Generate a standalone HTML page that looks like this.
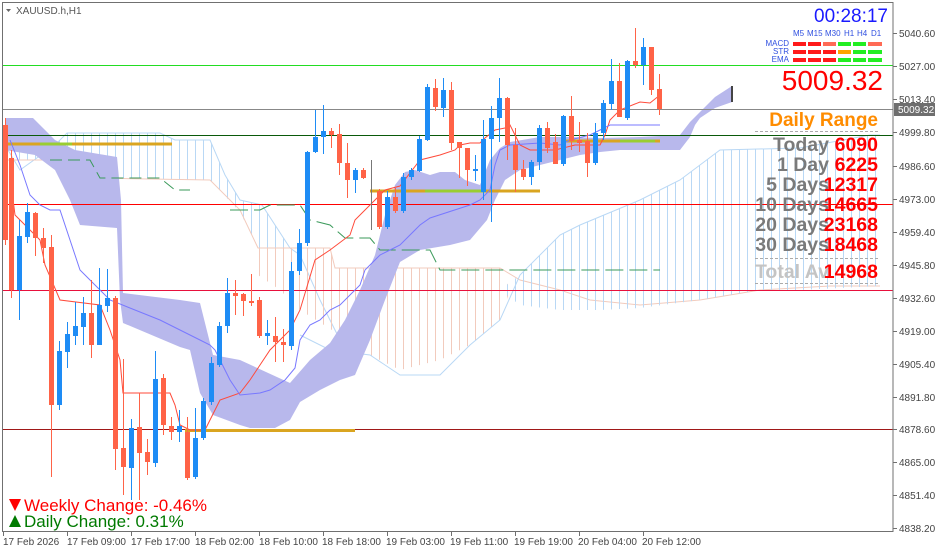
<!DOCTYPE html>
<html><head><meta charset="utf-8"><style>
html,body{margin:0;padding:0;background:#fff;}
svg{display:block;font-family:"Liberation Sans",sans-serif;}
.h{shape-rendering:crispEdges}
</style></head><body>
<svg width="939" height="552" viewBox="0 0 939 552" xmlns="http://www.w3.org/2000/svg">
<defs>
<pattern id="hb" width="8" height="10" patternUnits="userSpaceOnUse"><rect x="3" y="0" width="1" height="10" fill="#b9d8f5"/></pattern>
<pattern id="hs" width="8" height="10" patternUnits="userSpaceOnUse"><rect x="3" y="0" width="1" height="10" fill="#f2cbbd"/></pattern>
</defs>
<rect width="939" height="552" fill="#fff"/>
<!-- hatched clouds -->
<polygon fill="url(#hb)" points="8,150 55,145 67,133 160,133 175,140 210,140 225,175 240,200 262,205 290,248 258,248 240,212 210,180 90,178 85,160 20,160"/>
<polyline fill="none" stroke="#b9d8f5" points="8,150 20,170 55,145 67,133 160,133 175,140 210,140 225,175 240,200 262,205 290,248 300,255 320,300 330,320 340,340"/>
<polygon fill="url(#hs)" points="258,248 330,248 335,268 500,268 510,290 500,320 470,345 440,360 400,370 370,355 340,335 300,310 280,290 258,275"/>
<polyline fill="none" stroke="#f2cbbd" points="8,160 85,160 90,178 210,180 240,210 258,248 330,248 335,268 500,268 520,280 560,290 590,300 640,305 700,300 760,290 830,286 880,286"/>
<polygon fill="url(#hb)" points="500,290 520,275 560,235 580,225 640,200 680,180 720,150 800,148 870,135 880,135 880,286 800,290 760,290 700,300 640,308 600,310 560,310 520,305"/>
<polyline fill="none" stroke="#b9d8f5" points="300,335 330,350 370,355 400,375 440,375 470,345 500,320 520,275 560,235 580,225 640,200 680,180 720,150 800,148 870,135 880,135"/>
<!-- kumo -->
<polygon fill="#b8b8ec" points="5,118 33,118 40,125 55,140 75,150 117,157 121,200 123,293 180,300 200,303 213,355 240,360 290,383 310,360 330,343 345,320 360,290 375,255 385,215 395,185 405,172 415,170 430,175 440,172 455,172 465,180 480,185 490,160 500,148 510,142 540,137 570,137 600,138 640,137 680,135 690,122 700,112 715,97 732,86 732,102 715,108 700,118 695,125 690,137 680,150 620,150 600,152 580,155 560,160 540,165 520,170 505,180 495,200 487,220 470,240 450,245 420,250 400,262 385,300 370,340 355,375 340,380 320,390 300,402 290,420 275,428 250,428 240,425 213,415 200,393 190,350 180,347 123,323 120,300 117,228 80,225 70,200 55,170 35,155 5,150"/>
<line x1="732" y1="86" x2="732" y2="102" stroke="#444" stroke-width="2"/>
<!-- horizontal lines -->
<g class="h">
<line x1="3" y1="65.5" x2="893" y2="65.5" stroke="#22dd22"/>
<line x1="3" y1="109.5" x2="893" y2="109.5" stroke="#888"/>
<line x1="3" y1="135.5" x2="893" y2="135.5" stroke="#0a5a0a"/>
<line x1="3" y1="204.5" x2="893" y2="204.5" stroke="#ff0000"/>
<line x1="3" y1="290.5" x2="893" y2="290.5" stroke="#e8103c"/>
<line x1="3" y1="429.5" x2="893" y2="429.5" stroke="#a01818"/>
</g>
<!-- dashed chikou-like green -->
<polyline fill="none" stroke="#3a9a5a" stroke-dasharray="12,6" points="50,160 90,160 100,178 160,178 175,190 190,190"/>
<polyline fill="none" stroke="#3a9a5a" stroke-dasharray="18,6" points="230,210 260,210 270,205 300,205 310,220 330,225 345,238 370,238 380,250 430,250 440,270 660,270"/>
<!-- gold bars -->
<line x1="8" y1="144" x2="172" y2="144" stroke="#daa520" stroke-width="3"/>
<line x1="40" y1="144" x2="72" y2="144" stroke="#9acd32" stroke-width="3"/>
<line x1="370" y1="191" x2="540" y2="191" stroke="#daa520" stroke-width="3"/>
<line x1="425" y1="191" x2="485" y2="191" stroke="#9acd32" stroke-width="3"/>
<line x1="185" y1="430.5" x2="355" y2="430.5" stroke="#daa520" stroke-width="3"/>
<line x1="565" y1="141" x2="660" y2="141" stroke="#daa520" stroke-width="3"/>
<line x1="620" y1="141" x2="655" y2="141" stroke="#9acd32" stroke-width="3"/>
<!-- tenkan / kijun -->
<polyline fill="none" stroke="#ff4a3a" points="10,175 15,215 40,240 45,265 60,300 100,305 110,330 120,360 123,393 170,393 175,405 180,425 190,430 205,430 210,420 220,400 240,393 250,380 260,365 270,350 280,340 290,330 300,310 315,260 330,250 350,235 355,220 375,200 385,190 400,186 420,160 440,155 455,150 460,145 470,143 480,143 485,138 495,130 505,128 510,125 520,145 530,150 555,150 575,145 600,145 605,135 610,120 620,110 640,102 650,103 660,95"/>
<polyline fill="none" stroke="#7878ff" points="10,140 20,165 30,195 40,205 50,210 60,210 75,255 80,270 90,280 110,300 160,320 170,325 180,330 190,335 200,340 210,345 215,350 220,360 230,380 240,395 260,393 270,390 285,380 295,368 300,340 310,325 320,320 330,310 340,305 350,295 360,285 365,270 375,260 380,255 390,250 400,245 420,225 430,218 470,205 480,200 490,190 495,165 500,150 510,145 540,143 560,145 570,140 590,135 600,130 610,125 620,125 640,125 660,125"/>
<line x1="371.5" y1="160" x2="371.5" y2="230" stroke="#777"/>
<!-- candles -->
<g class="h">
<g stroke="#ff6347" fill="#ff6347">
<line x1="5.5" y1="118" x2="5.5" y2="245"/><rect x="3" y="125" width="5" height="115" stroke="none"/>
<line x1="11.5" y1="150" x2="11.5" y2="298"/><rect x="9" y="158" width="5" height="132" stroke="none"/>
<line x1="35.5" y1="212" x2="35.5" y2="256"/><rect x="33" y="213" width="5" height="25" stroke="none"/>
<line x1="43.5" y1="228" x2="43.5" y2="263"/><rect x="41" y="238" width="5" height="10" stroke="none"/>
<line x1="51.5" y1="235" x2="51.5" y2="477"/><rect x="49" y="247" width="5" height="158" stroke="none"/>
<line x1="91.5" y1="280" x2="91.5" y2="358"/><rect x="89" y="313" width="5" height="32" stroke="none"/>
<line x1="115.5" y1="296" x2="115.5" y2="470"/><rect x="113" y="298" width="5" height="151" stroke="none"/>
<line x1="123.5" y1="359" x2="123.5" y2="495"/><rect x="121" y="448" width="5" height="19" stroke="none"/>
<line x1="139.5" y1="393" x2="139.5" y2="500"/><rect x="137" y="427" width="5" height="26" stroke="none"/>
<line x1="147.5" y1="439" x2="147.5" y2="475"/><rect x="145" y="452" width="5" height="10" stroke="none"/>
<line x1="163.5" y1="374" x2="163.5" y2="435"/><rect x="161" y="378" width="5" height="47" stroke="none"/>
<line x1="171.5" y1="417" x2="171.5" y2="440"/><rect x="169" y="426" width="5" height="6" stroke="none"/>
<line x1="187.5" y1="417" x2="187.5" y2="480"/><rect x="185" y="432" width="5" height="46" stroke="none"/>
<line x1="235.5" y1="280" x2="235.5" y2="315"/><rect x="233" y="293" width="5" height="3" stroke="none"/>
<line x1="243.5" y1="293" x2="243.5" y2="316"/><rect x="241" y="294" width="5" height="7" stroke="none"/>
<line x1="251.5" y1="274" x2="251.5" y2="306"/><rect x="249" y="301" width="5" height="2" stroke="none"/>
<line x1="259.5" y1="297" x2="259.5" y2="338"/><rect x="257" y="300" width="5" height="36" stroke="none"/>
<line x1="275.5" y1="317" x2="275.5" y2="362"/><rect x="273" y="336" width="5" height="6" stroke="none"/>
<line x1="283.5" y1="329" x2="283.5" y2="362"/><rect x="281" y="342" width="5" height="3" stroke="none"/>
<line x1="331.5" y1="128" x2="331.5" y2="148"/><rect x="329" y="131" width="5" height="4" stroke="none"/>
<line x1="339.5" y1="124" x2="339.5" y2="175"/><rect x="337" y="134" width="5" height="29" stroke="none"/>
<line x1="347.5" y1="143" x2="347.5" y2="198"/><rect x="345" y="163" width="5" height="17" stroke="none"/>
<line x1="363.5" y1="168" x2="363.5" y2="179"/><rect x="361" y="170" width="5" height="8" stroke="none"/>
<line x1="379.5" y1="189" x2="379.5" y2="229"/><rect x="377" y="191" width="5" height="36" stroke="none"/>
<line x1="395.5" y1="188" x2="395.5" y2="213"/><rect x="393" y="197" width="5" height="14" stroke="none"/>
<line x1="435.5" y1="79" x2="435.5" y2="111"/><rect x="433" y="88" width="5" height="19" stroke="none"/>
<line x1="451.5" y1="82" x2="451.5" y2="150"/><rect x="449" y="90" width="5" height="53" stroke="none"/>
<line x1="459.5" y1="142" x2="459.5" y2="178"/><rect x="457" y="142" width="5" height="6" stroke="none"/>
<line x1="467.5" y1="148" x2="467.5" y2="186"/><rect x="465" y="148" width="5" height="22" stroke="none"/>
<line x1="507.5" y1="97" x2="507.5" y2="160"/><rect x="505" y="98" width="5" height="47" stroke="none"/>
<line x1="515.5" y1="128" x2="515.5" y2="192"/><rect x="513" y="145" width="5" height="25" stroke="none"/>
<line x1="523.5" y1="160" x2="523.5" y2="180"/><rect x="521" y="169" width="5" height="8" stroke="none"/>
<line x1="547.5" y1="122" x2="547.5" y2="153"/><rect x="545" y="128" width="5" height="20" stroke="none"/>
<line x1="555.5" y1="134" x2="555.5" y2="164"/><rect x="553" y="142" width="5" height="22" stroke="none"/>
<line x1="571.5" y1="96" x2="571.5" y2="150"/><rect x="569" y="116" width="5" height="25" stroke="none"/>
<line x1="579.5" y1="122" x2="579.5" y2="152"/><rect x="577" y="140" width="5" height="3" stroke="none"/>
<line x1="587.5" y1="133" x2="587.5" y2="177"/><rect x="585" y="141" width="5" height="22" stroke="none"/>
<line x1="619.5" y1="63" x2="619.5" y2="117"/><rect x="617" y="81" width="5" height="36" stroke="none"/>
<line x1="635.5" y1="28" x2="635.5" y2="68"/><rect x="633" y="61" width="5" height="4" stroke="none"/>
<line x1="651.5" y1="47" x2="651.5" y2="95"/><rect x="649" y="47" width="5" height="43" stroke="none"/>
<line x1="659.5" y1="74" x2="659.5" y2="115"/><rect x="657" y="89" width="5" height="20" stroke="none"/>
</g>
<g stroke="#1e8cf5" fill="#1e8cf5">
<line x1="19.5" y1="220" x2="19.5" y2="320"/><rect x="17" y="236" width="5" height="54" stroke="none"/>
<line x1="27.5" y1="203" x2="27.5" y2="243"/><rect x="25" y="212" width="5" height="25" stroke="none"/>
<line x1="59.5" y1="341" x2="59.5" y2="410"/><rect x="57" y="351" width="5" height="54" stroke="none"/>
<line x1="67.5" y1="322" x2="67.5" y2="368"/><rect x="65" y="334" width="5" height="18" stroke="none"/>
<line x1="75.5" y1="302" x2="75.5" y2="345"/><rect x="73" y="326" width="5" height="10" stroke="none"/>
<line x1="83.5" y1="297" x2="83.5" y2="345"/><rect x="81" y="313" width="5" height="14" stroke="none"/>
<line x1="99.5" y1="268" x2="99.5" y2="345"/><rect x="97" y="305" width="5" height="40" stroke="none"/>
<line x1="107.5" y1="269" x2="107.5" y2="312"/><rect x="105" y="298" width="5" height="8" stroke="none"/>
<line x1="131.5" y1="419" x2="131.5" y2="500"/><rect x="129" y="428" width="5" height="40" stroke="none"/>
<line x1="155.5" y1="351" x2="155.5" y2="467"/><rect x="153" y="379" width="5" height="84" stroke="none"/>
<line x1="179.5" y1="410" x2="179.5" y2="442"/><rect x="177" y="426" width="5" height="6" stroke="none"/>
<line x1="195.5" y1="408" x2="195.5" y2="479"/><rect x="193" y="438" width="5" height="39" stroke="none"/>
<line x1="203.5" y1="398" x2="203.5" y2="440"/><rect x="201" y="401" width="5" height="37" stroke="none"/>
<line x1="211.5" y1="357" x2="211.5" y2="405"/><rect x="209" y="363" width="5" height="39" stroke="none"/>
<line x1="219.5" y1="322" x2="219.5" y2="367"/><rect x="217" y="326" width="5" height="39" stroke="none"/>
<line x1="227.5" y1="278" x2="227.5" y2="333"/><rect x="225" y="293" width="5" height="33" stroke="none"/>
<line x1="267.5" y1="320" x2="267.5" y2="345"/><rect x="265" y="333" width="5" height="3" stroke="none"/>
<line x1="291.5" y1="262" x2="291.5" y2="350"/><rect x="289" y="271" width="5" height="75" stroke="none"/>
<line x1="299.5" y1="229" x2="299.5" y2="275"/><rect x="297" y="243" width="5" height="28" stroke="none"/>
<line x1="307.5" y1="151" x2="307.5" y2="246"/><rect x="305" y="152" width="5" height="91" stroke="none"/>
<line x1="315.5" y1="110" x2="315.5" y2="153"/><rect x="313" y="137" width="5" height="15" stroke="none"/>
<line x1="323.5" y1="105" x2="323.5" y2="154"/><rect x="321" y="131" width="5" height="6" stroke="none"/>
<line x1="355.5" y1="168" x2="355.5" y2="193"/><rect x="353" y="170" width="5" height="10" stroke="none"/>
<line x1="387.5" y1="191" x2="387.5" y2="229"/><rect x="385" y="197" width="5" height="30" stroke="none"/>
<line x1="403.5" y1="173" x2="403.5" y2="213"/><rect x="401" y="177" width="5" height="34" stroke="none"/>
<line x1="411.5" y1="168" x2="411.5" y2="180"/><rect x="409" y="170" width="5" height="7" stroke="none"/>
<line x1="419.5" y1="136" x2="419.5" y2="172"/><rect x="417" y="139" width="5" height="32" stroke="none"/>
<line x1="427.5" y1="84" x2="427.5" y2="141"/><rect x="425" y="87" width="5" height="53" stroke="none"/>
<line x1="443.5" y1="78" x2="443.5" y2="117"/><rect x="441" y="90" width="5" height="18" stroke="none"/>
<line x1="475.5" y1="155" x2="475.5" y2="181"/><rect x="473" y="169" width="5" height="2" stroke="none"/>
<line x1="483.5" y1="120" x2="483.5" y2="200"/><rect x="481" y="139" width="5" height="53" stroke="none"/>
<line x1="491.5" y1="106" x2="491.5" y2="222"/><rect x="489" y="118" width="5" height="21" stroke="none"/>
<line x1="499.5" y1="78" x2="499.5" y2="142"/><rect x="497" y="98" width="5" height="20" stroke="none"/>
<line x1="531.5" y1="160" x2="531.5" y2="185"/><rect x="529" y="162" width="5" height="15" stroke="none"/>
<line x1="539.5" y1="125" x2="539.5" y2="170"/><rect x="537" y="128" width="5" height="34" stroke="none"/>
<line x1="563.5" y1="115" x2="563.5" y2="166"/><rect x="561" y="116" width="5" height="48" stroke="none"/>
<line x1="595.5" y1="123" x2="595.5" y2="165"/><rect x="593" y="133" width="5" height="30" stroke="none"/>
<line x1="603.5" y1="100" x2="603.5" y2="140"/><rect x="601" y="103" width="5" height="30" stroke="none"/>
<line x1="611.5" y1="59" x2="611.5" y2="110"/><rect x="609" y="81" width="5" height="23" stroke="none"/>
<line x1="627.5" y1="60" x2="627.5" y2="120"/><rect x="625" y="61" width="5" height="57" stroke="none"/>
<line x1="643.5" y1="38" x2="643.5" y2="85"/><rect x="641" y="47" width="5" height="18" stroke="none"/>
</g>
</g>
<!-- frame -->
<rect class="h" x="2.5" y="2.5" width="890.5" height="529" fill="none" stroke="#707070"/>
<!-- top-left label -->
<polygon points="6,9 11,9 8.5,12" fill="#666"/>
<text x="16" y="14" font-size="10" fill="#555">XAUUSD.h,H1</text>
<!-- price axis -->
<g font-size="10" fill="#444">
<g stroke="#707070" class="h"><line x1="893" y1="33.5" x2="897" y2="33.5"/><line x1="893" y1="66.5" x2="897" y2="66.5"/><line x1="893" y1="99.5" x2="897" y2="99.5"/><line x1="893" y1="132.5" x2="897" y2="132.5"/><line x1="893" y1="166.5" x2="897" y2="166.5"/><line x1="893" y1="199.5" x2="897" y2="199.5"/><line x1="893" y1="232.5" x2="897" y2="232.5"/><line x1="893" y1="265.5" x2="897" y2="265.5"/><line x1="893" y1="298.5" x2="897" y2="298.5"/><line x1="893" y1="331.5" x2="897" y2="331.5"/><line x1="893" y1="364.5" x2="897" y2="364.5"/><line x1="893" y1="397.5" x2="897" y2="397.5"/><line x1="893" y1="429.5" x2="897" y2="429.5"/><line x1="893" y1="462.5" x2="897" y2="462.5"/><line x1="893" y1="495.5" x2="897" y2="495.5"/><line x1="893" y1="528.5" x2="897" y2="528.5"/></g>
<text x="899" y="37">5040.60</text><text x="899" y="70">5027.00</text><text x="899" y="103">5013.40</text><text x="899" y="136">4999.80</text><text x="899" y="170">4986.60</text><text x="899" y="203">4973.00</text><text x="899" y="236">4959.40</text><text x="899" y="269">4945.80</text><text x="899" y="302">4932.60</text><text x="899" y="335">4919.00</text><text x="899" y="368">4905.40</text><text x="899" y="401">4891.80</text><text x="899" y="433">4878.60</text><text x="899" y="466">4865.00</text><text x="899" y="499">4851.40</text><text x="899" y="532">4838.20</text>
</g>
<rect x="894" y="103" width="41" height="13" fill="#6e6e6e"/>
<text x="898" y="113" font-size="10" fill="#fff">5009.32</text>
<!-- time axis -->
<g font-size="10" fill="#444">
<g stroke="#707070" class="h"><line x1="3.5" y1="531" x2="3.5" y2="536"/><line x1="67.5" y1="531" x2="67.5" y2="536"/><line x1="131.5" y1="531" x2="131.5" y2="536"/><line x1="195.5" y1="531" x2="195.5" y2="536"/><line x1="259.5" y1="531" x2="259.5" y2="536"/><line x1="323.5" y1="531" x2="323.5" y2="536"/><line x1="387.5" y1="531" x2="387.5" y2="536"/><line x1="451.5" y1="531" x2="451.5" y2="536"/><line x1="515.5" y1="531" x2="515.5" y2="536"/><line x1="579.5" y1="531" x2="579.5" y2="536"/><line x1="643.5" y1="531" x2="643.5" y2="536"/></g>
<text x="3" y="545">17 Feb 2026</text><text x="67" y="545">17 Feb 09:00</text><text x="131" y="545">17 Feb 17:00</text><text x="195" y="545">18 Feb 02:00</text><text x="259" y="545">18 Feb 10:00</text><text x="322" y="545">18 Feb 18:00</text><text x="386" y="545">19 Feb 03:00</text><text x="450" y="545">19 Feb 11:00</text><text x="514" y="545">19 Feb 19:00</text><text x="578" y="545">20 Feb 04:00</text><text x="642" y="545">20 Feb 12:00</text>
</g>
<!-- changes -->
<polygon points="9,499 21,499 15,511" fill="#ff0000"/>
<text x="24" y="511" font-size="17" fill="#ff0000">Weekly Change: -0.46%</text>
<polygon points="9,527 21,527 15,515" fill="#007a00"/>
<text x="24" y="527" font-size="17" fill="#007a00">Daily Change: 0.31%</text>
<!-- right panel -->
<text x="888" y="22" font-size="19" fill="#1a1aff" text-anchor="end">00:28:17</text>
<g font-size="8" fill="#3050e0">
<text x="793" y="36">M5</text><text x="807" y="36">M15</text><text x="825" y="36">M30</text><text x="844" y="36">H1</text><text x="857" y="36">H4</text><text x="871" y="36">D1</text>
<text x="789" y="46" text-anchor="end">MACD</text><text x="789" y="54" text-anchor="end">STR</text><text x="789" y="62" text-anchor="end">EMA</text>
</g>
<g>
<rect x="793" y="42" width="13" height="4" fill="#ff1a1a"/><rect x="808" y="42" width="13" height="4" fill="#ff1a1a"/><rect x="823" y="42" width="13" height="4" fill="#ff6a55"/><rect x="838" y="42" width="13" height="4" fill="#22ee22"/><rect x="853" y="42" width="13" height="4" fill="#22ee22"/><rect x="868" y="42" width="14" height="4" fill="#ff6a55"/>
<rect x="793" y="50" width="13" height="4" fill="#ff1a1a"/><rect x="808" y="50" width="13" height="4" fill="#ff1a1a"/><rect x="823" y="50" width="13" height="4" fill="#ff1a1a"/><rect x="838" y="50" width="13" height="4" fill="#ffa500"/><rect x="853" y="50" width="13" height="4" fill="#22ee22"/><rect x="868" y="50" width="14" height="4" fill="#22ee22"/>
<rect x="793" y="58" width="13" height="4" fill="#ff1a1a"/><rect x="808" y="58" width="13" height="4" fill="#ff1a1a"/><rect x="823" y="58" width="13" height="4" fill="#ff1a1a"/><rect x="838" y="58" width="13" height="4" fill="#22ee22"/><rect x="853" y="58" width="13" height="4" fill="#22ee22"/><rect x="868" y="58" width="14" height="4" fill="#22ee22"/>
</g>
<text x="883" y="90" font-size="28" fill="#ff0000" text-anchor="end">5009.32</text>
<text x="878" y="126" font-size="19" font-weight="bold" fill="#ff8c00" text-anchor="end">Daily Range</text>
<line class="h" x1="755" y1="131.5" x2="878" y2="131.5" stroke="#aaa" stroke-dasharray="3,2"/>
<g font-size="19.5" font-weight="bold" text-anchor="end">
<g fill="#7a7a7a">
<text x="829" y="151">Today</text><text x="829" y="171">1 Day</text><text x="829" y="191">5 Days</text><text x="829" y="211">10 Days</text><text x="829" y="231">20 Days</text><text x="829" y="251">30 Days</text>
</g>
<text x="829" y="278" fill="#c4c4c4">Total Av</text>
<g fill="#ff0000">
<text x="878" y="151">6090</text><text x="878" y="171">6225</text><text x="878" y="191">12317</text><text x="878" y="211">14665</text><text x="878" y="231">23168</text><text x="878" y="251">18468</text><text x="878" y="278">14968</text>
</g>
</g>
<line class="h" x1="755" y1="258.5" x2="878" y2="258.5" stroke="#aaa" stroke-dasharray="3,2"/>
<line class="h" x1="755" y1="283.5" x2="878" y2="283.5" stroke="#aaa" stroke-dasharray="3,2"/>
</svg>
</body></html>
